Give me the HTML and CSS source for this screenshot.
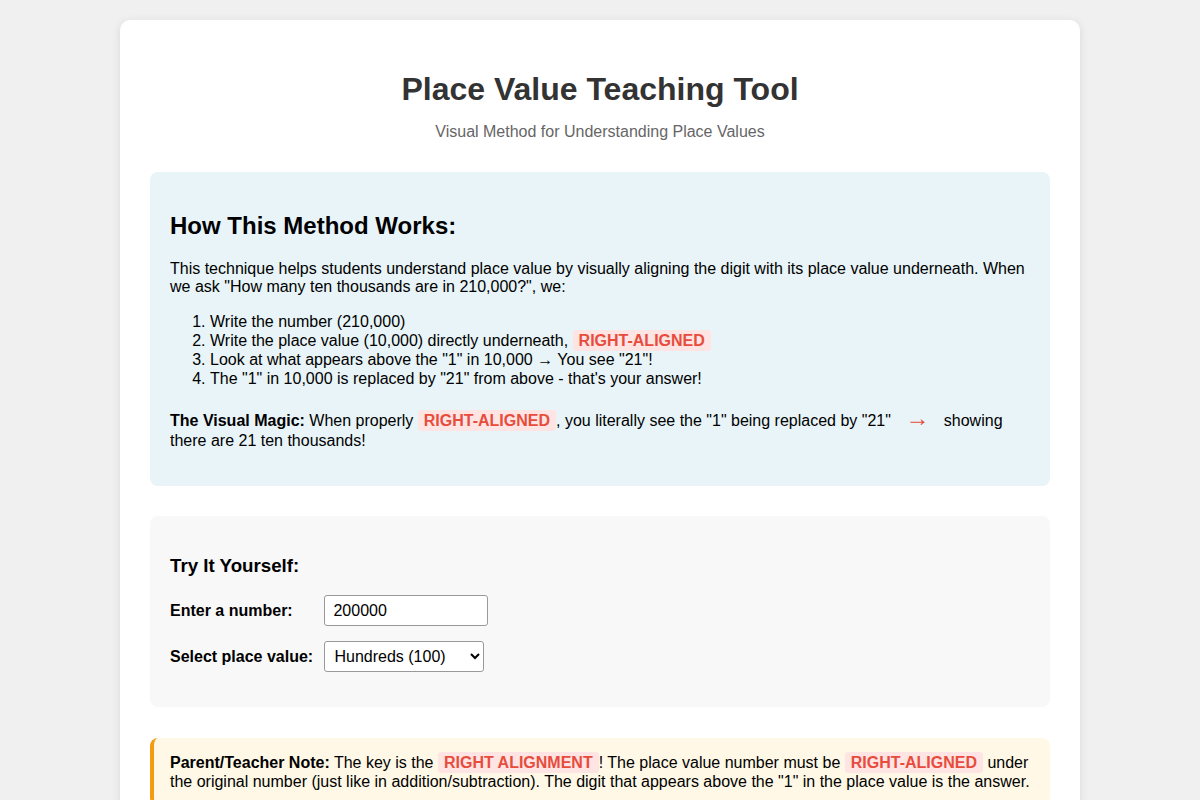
FILE: index.html
```html
<!DOCTYPE html>
<html lang="en">
<head>
<meta charset="utf-8">
<title>Place Value Teaching Tool</title>
<link rel="stylesheet" href="styles.css">
</head>
<body>
<div class="container">
  <h1 class="title">Place Value Teaching Tool</h1>
  <p class="subtitle">Visual Method for Understanding Place Values</p>

  <div class="explain">
    <h2>How This Method Works:</h2>
    <p>This technique helps students understand place value by visually aligning the digit with its place value underneath. When we ask "How many ten thousands are in 210,000?", we:</p>
    <ol>
      <li>Write the number (210,000)</li>
      <li>Write the place value (10,000) directly underneath, <span class="hl">RIGHT-ALIGNED</span></li>
      <li>Look at what appears above the "1" in 10,000 → You see "21"!</li>
      <li>The "1" in 10,000 is replaced by "21" from above - that's your answer!</li>
    </ol>
    <p class="magic"><strong>The Visual Magic:</strong> When properly <span class="hl">RIGHT-ALIGNED</span>, you literally see the "1" being replaced by "21" <span class="arrow">→</span> showing there are 21 ten thousands!</p>
  </div>

  <div class="try">
    <h3>Try It Yourself:</h3>
    <div class="row">
      <label class="lbl" for="num">Enter a number:</label>
      <input class="field" id="num" type="text" value="200000">
    </div>
    <div class="row">
      <label class="lbl" for="pv">Select place value:</label>
      <select class="field sel" id="pv">
        <option>Ones (1)</option>
        <option>Tens (10)</option>
        <option selected>Hundreds (100)</option>
        <option>Thousands (1,000)</option>
        <option>Ten Thousands (10,000)</option>
        <option>Hundred Thousands (100,000)</option>
      </select>
    </div>
  </div>

  <div class="note">
    <strong>Parent/Teacher Note:</strong> The key is the <span class="hl">RIGHT ALIGNMENT</span>! The place value number must be <span class="hl">RIGHT-ALIGNED</span> under the original number (just like in addition/subtraction). The digit that appears above the "1" in the place value is the answer.
  </div>
</div>
</body>
</html>
```

FILE: styles.css
```css
* { box-sizing: content-box; }

body {
  margin: 0;
  padding: 20px;
  background: #f0f0f0;
  font-family: "Liberation Sans", Arial, sans-serif;
  color: #000;
}

.container {
  max-width: 900px;
  margin: 0 auto;
  padding: 30px;
  background: #fff;
  border-radius: 10px;
  box-shadow: 0 2px 10px rgba(0, 0, 0, 0.1);
}

.title {
  text-align: center;
  color: #333;
  font-size: 32px;
  margin: 21px 0 15px;
}

.subtitle {
  text-align: center;
  color: #666;
  font-size: 16px;
  margin: 0 0 31px;
}

.explain {
  background: #e8f4f8;
  border-radius: 8px;
  padding: 20px;
  margin-bottom: 30px;
}

.explain h2 {
  font-size: 24px;
  margin: 20px 0;
}

.explain p { margin: 16px 0; }

.explain ol { margin: 16px 0; }

.explain li { line-height: 19px; }

.hl {
  color: #e74c3c;
  background: #ffe4e4;
  font-weight: bold;
  padding: 2px 6px;
  border-radius: 3px;
}

.arrow {
  color: #e74c3c;
  font-size: 24px;
  margin: 0 10px;
}

.try {
  background: #f8f8f8;
  border-radius: 8px;
  padding: 20px;
  margin-bottom: 31px;
}

.try h3 {
  font-size: 18.72px;
  margin: 18.72px 0;
}

.row { margin: 15px 0; }

.lbl {
  display: inline-block;
  width: 150px;
  font-weight: bold;
}

.field {
  box-sizing: border-box;
  font-family: "Liberation Sans", Arial, sans-serif;
  font-size: 16px;
  height: 31px;
  padding: 5px 8px;
  border: 1px solid #999;
  border-radius: 3px;
  width: 164px;
  color: #000;
  background: #fff;
}

.sel {
  width: 160px;
  padding: 4px 5px;
}

.note {
  background: #fff8e6;
  border-left: 4px solid #f39c12;
  border-radius: 8px;
  padding: 15px 16px;
  line-height: 19px;
}
```
